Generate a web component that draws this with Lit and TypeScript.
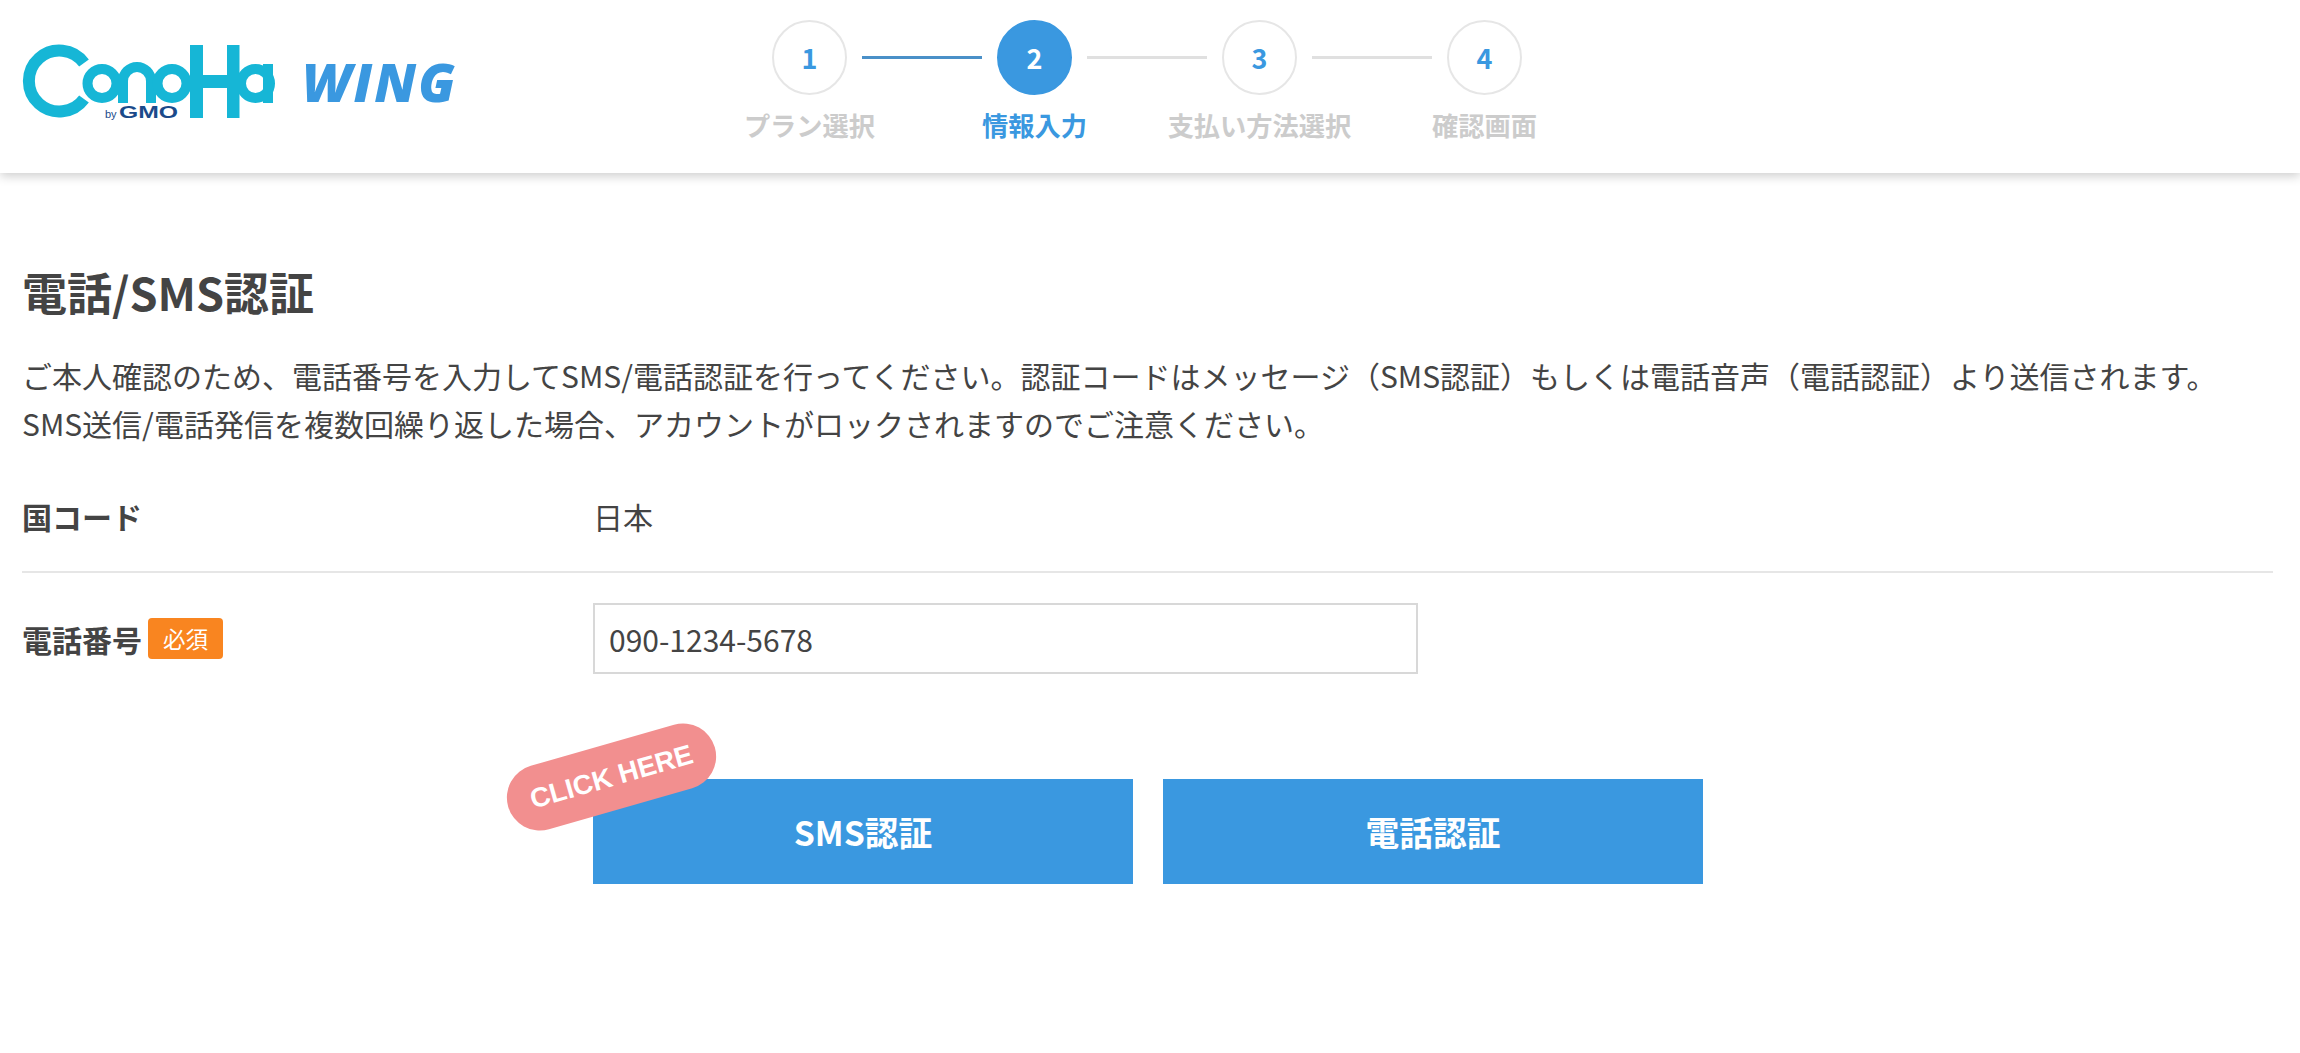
import { LitElement, html, css } from "lit";
import { customElement } from "lit/decorators.js";

const steps = [
  { n: "1", label: "プラン選択", state: "done" },
  { n: "2", label: "情報入力", state: "active" },
  { n: "3", label: "支払い方法選択", state: "" },
  { n: "4", label: "確認画面", state: "" },
];

@customElement("app-root")
export class AppRoot extends LitElement {
  static styles = css`
    :host {
      display: block;
      width: 2300px;
      height: 1053px;
      overflow: hidden;
      background: #fff;
      color: #444;
      font-family: "Noto Sans CJK JP", "Noto Sans", sans-serif;
    }
    * { box-sizing: border-box; }
    .header {
      height: 173px;
      display: flex;
      background: #fff;
      box-shadow: 0 3px 10px rgba(0, 0, 0, 0.2);
    }
    .brand {
      width: 697px;
      flex: none;
      display: flex;
      align-items: flex-start;
      padding: 35px 0 0 15px;
    }
    .logo { display: block; width: 270px; height: 95px; flex: none; }
    .wing {
      margin: 15px 0 0 17px;
      font-family: "Open Sans", sans-serif;
      font-weight: 800;
      font-style: italic;
      font-size: 53px;
      line-height: 64px;
      letter-spacing: 2px;
      color: #3a98e0;
    }
    .steps { padding-top: 20px; }
    .circles { display: flex; align-items: center; gap: 15px; margin-left: 75px; }
    .circle {
      width: 75px;
      height: 75px;
      flex: none;
      display: flex;
      align-items: center;
      justify-content: center;
      border: 2px solid #e6e6e6;
      border-radius: 50%;
      background: #fff;
      color: #3a98e0;
      font-size: 27px;
      font-weight: 700;
      line-height: 1;
    }
    .circle.active { background: #3a98e0; border-color: #3a98e0; color: #fff; }
    .line { width: 120px; height: 3px; flex: none; background: #e0e0e0; }
    .line.done { background: #4a90c8; }
    .labels { display: flex; margin-top: 11px; }
    .labels span {
      width: 225px;
      text-align: center;
      font-size: 26.25px;
      font-weight: 700;
      line-height: 38px;
      color: #ccc;
    }
    .labels span.active { color: #3a98e0; }
    .main { padding: 89px 27px 0 22px; }
    h1 {
      margin: 0;
      font-size: 45px;
      font-weight: 700;
      line-height: 60px;
    }
    p {
      margin: 29px 0 0;
      font-size: 30px;
      line-height: 48px;
      white-space: nowrap;
    }
    .row { display: flex; align-items: center; }
    .row-country {
      padding: 45px 0 31px;
      border-bottom: 2px solid #e6e6e6;
    }
    .row-phone { padding-top: 30px; }
    .key {
      width: 571px;
      flex: none;
      display: flex;
      align-items: center;
      gap: 6px;
      font-size: 30px;
      font-weight: 700;
      line-height: 48px;
    }
    .val { font-size: 30px; line-height: 48px; }
    .req {
      width: 75px;
      height: 41px;
      display: flex;
      align-items: center;
      justify-content: center;
      background: #f98520;
      border-radius: 4px;
      color: #fff;
      font-size: 22.5px;
      font-weight: 400;
      line-height: 1;
    }
    input {
      width: 825px;
      height: 71px;
      padding: 0 14px;
      border: 2px solid #d8d8d8;
      border-radius: 0;
      outline: none;
      background: #fff;
      color: #444;
      font-family: inherit;
      font-size: 30px;
    }
    .actions {
      position: relative;
      display: flex;
      gap: 30px;
      margin: 105px 0 0 571px;
      width: 1110px;
    }
    .btn {
      width: 540px;
      height: 105px;
      flex: none;
      padding: 0;
      border: 0;
      background: #3a98e0;
      color: #fff;
      font-family: inherit;
      font-size: 33.75px;
      font-weight: 700;
    }
    .click {
      position: absolute;
      left: -89px;
      top: -35px;
      width: 215px;
      height: 66px;
      display: flex;
      align-items: center;
      justify-content: center;
      border-radius: 33px;
      background: #f28f8f;
      color: #fff;
      font-family: "Liberation Sans", Arial, sans-serif;
      font-size: 27.5px;
      font-weight: 700;
      transform: rotate(-16deg);
    }
  `;

  private logo() {
    return html`<svg class="logo" viewBox="0 0 270 95" aria-label="ConoHa by GMO">
      <g fill="none" stroke="#16b6d6">
        <path d="M69 28 A30.5 30.5 0 1 0 69 64" stroke-width="12" />
        <circle cx="87" cy="48.5" r="14.5" stroke-width="10" />
        <path d="M108 68 V46 A14 14 0 0 1 136 46 V68" stroke-width="10" />
        <circle cx="157" cy="48.5" r="14.5" stroke-width="10" />
        <circle cx="240.5" cy="48.5" r="14.5" stroke-width="10" />
      </g>
      <g fill="#16b6d6">
        <rect x="175" y="10" width="13" height="73" />
        <rect x="212" y="10" width="12.5" height="73" />
        <rect x="180" y="40" width="40" height="13" />
        <rect x="248" y="29" width="10" height="39" />
      </g>
      <text x="90" y="82.5" font-family="Liberation Sans, sans-serif" font-size="11" fill="#1b4a8a">by</text>
      <text x="104" y="83" font-family="Liberation Sans, sans-serif" font-size="16" font-weight="700" fill="#1b4a8a" textLength="59" lengthAdjust="spacingAndGlyphs">GMO</text>
    </svg>`;
  }

  render() {
    return html`
      <header class="header">
        <div class="brand">${this.logo()}<span class="wing">WING</span></div>
        <div class="steps">
          <div class="circles">
            <span class="circle">1</span>
            <span class="line done"></span>
            <span class="circle active">2</span>
            <span class="line"></span>
            <span class="circle">3</span>
            <span class="line"></span>
            <span class="circle">4</span>
          </div>
          <div class="labels">
            ${steps.map((s) => html`<span class=${s.state === "active" ? "active" : ""}>${s.label}</span>`)}
          </div>
        </div>
      </header>
      <main class="main">
        <h1>電話/SMS認証</h1>
        <p>ご本人確認のため、電話番号を入力してSMS/電話認証を行ってください。認証コードはメッセージ（SMS認証）もしくは電話音声（電話認証）より送信されます。<br />SMS送信/電話発信を複数回繰り返した場合、アカウントがロックされますのでご注意ください。</p>
        <div class="row row-country">
          <div class="key">国コード</div>
          <div class="val">日本</div>
        </div>
        <div class="row row-phone">
          <div class="key">電話番号<span class="req">必須</span></div>
          <input type="text" .value=${"090-1234-5678"} />
        </div>
        <div class="actions">
          <button class="btn">SMS認証</button>
          <button class="btn">電話認証</button>
          <span class="click">CLICK HERE</span>
        </div>
      </main>
    `;
  }
}
